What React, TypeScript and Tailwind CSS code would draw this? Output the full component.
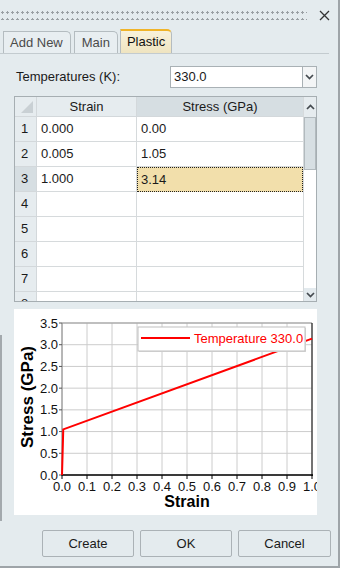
import React from 'react';

const rows = [
  { n: 1, strain: '0.000', stress: '0.00' },
  { n: 2, strain: '0.005', stress: '1.05' },
  { n: 3, strain: '1.000', stress: '3.14' },
  { n: 4, strain: '', stress: '' },
  { n: 5, strain: '', stress: '' },
  { n: 6, strain: '', stress: '' },
  { n: 7, strain: '', stress: '' },
  { n: 8, strain: '', stress: '' },
];

// plot area inside the chart panel
const PX0 = 48;
const PX1 = 298;
const PY0 = 14;
const PY1 = 166;
const sx = (v: number) => PX0 + v * (PX1 - PX0);
const sy = (v: number) => PY1 - (v / 3.5) * (PY1 - PY0);

const data: [number, number][] = [
  [0, 0],
  [0.005, 1.05],
  [1.0, 3.14],
];

const FONT = "'Liberation Sans', Arial, sans-serif";

function Chart() {
  const xs = Array.from({ length: 11 }, (_, i) => i / 10);
  const ys = Array.from({ length: 8 }, (_, i) => i * 0.5);
  return (
    <svg width="303" height="206" viewBox="0 0 303 206" className="block">
      {xs.map((v) => (
        <line key={'gx' + v} x1={sx(v)} x2={sx(v)} y1={PY0} y2={PY1} stroke="#cccccc" strokeWidth="1" />
      ))}
      {ys.map((v) => (
        <line key={'gy' + v} x1={PX0} x2={PX1} y1={sy(v)} y2={sy(v)} stroke="#cccccc" strokeWidth="1" />
      ))}
      <line x1={PX0} x2={PX1} y1={PY0} y2={PY0} stroke="#999999" />
      <line x1={PX0} x2={PX0} y1={PY0} y2={PY1} stroke="#888888" />
      <line x1={PX1} x2={PX1} y1={PY0} y2={PY1 + 1} stroke="#000000" />
      <line x1={PX0 - 1} x2={PX1 + 1} y1={PY1} y2={PY1} stroke="#000000" strokeWidth="1.5" />
      {xs.map((v) => (
        <line key={'tx' + v} x1={sx(v)} x2={sx(v)} y1={PY1} y2={PY1 + 4} stroke="#000000" />
      ))}
      {ys.map((v) => (
        <line key={'ty' + v} x1={PX0 - 3} x2={PX0} y1={sy(v)} y2={sy(v)} stroke="#555555" />
      ))}
      {ys.map((v) => (
        <text key={'ly' + v} x={PX0 - 4} y={sy(v) + 4.5} textAnchor="end" fontSize="13" fill="#111111" fontFamily={FONT}>
          {v.toFixed(1)}
        </text>
      ))}
      {xs.map((v) => (
        <text key={'lx' + v} x={sx(v)} y={PY1 + 16} textAnchor="middle" fontSize="13" fill="#111111" fontFamily={FONT}>
          {v.toFixed(1)}
        </text>
      ))}
      <polyline
        points={data.map(([x, y]) => `${sx(x)},${sy(y)}`).join(' ')}
        fill="none"
        stroke="#ff0000"
        strokeWidth="2"
      />
      {/* legend */}
      <rect x="125" y="19" width="167" height="24" fill="#d8d8d8" />
      <rect x="124" y="18" width="167" height="24" fill="#ffffff" stroke="#c0c0c0" />
      <line x1="127" x2="176" y1="29" y2="29" stroke="#ff0000" strokeWidth="2" />
      <text x="180" y="34" fontSize="13" fill="#ff0000" fontFamily={FONT}>
        Temperature 330.0
      </text>
      <text x="173" y="198" textAnchor="middle" fontSize="16" fontWeight="bold" fill="#000000" fontFamily={FONT}>
        Strain
      </text>
      <text
        transform="translate(19 88) rotate(-90)"
        textAnchor="middle"
        fontSize="17"
        fontWeight="bold"
        fill="#000000"
        fontFamily={FONT}
      >
        Stress (GPa)
      </text>
    </svg>
  );
}

function Chevron({ up = false }: { up?: boolean }) {
  return (
    <svg width="9" height="6" viewBox="0 0 9 6">
      <path d={up ? 'M1 5 L4.5 1.5 L8 5' : 'M1 1 L4.5 4.5 L8 1'} fill="none" stroke="#444a4f" strokeWidth="1.7" />
    </svg>
  );
}

export default function App() {
  return (
    <div
      className="relative w-[340px] h-[568px] overflow-hidden bg-[#e4ebee] text-[13px] text-[#1a1a1a] border-r-2 border-b-2 border-[#9ea4a8]"
      style={{ fontFamily: FONT }}
    >
      {/* edge of the window behind */}
      <div className="absolute left-0 top-[335px] h-[186px] w-[2px] bg-[#a3a9ad]" />

      {/* grip bar */}
      <div className="flex h-[31px] items-center pr-[8px]">
        <div className="h-[9px] flex-1 bg-[radial-gradient(circle,#9aa0a4_1px,transparent_1.4px)] bg-[length:5px_7px] bg-[position:0_-2px] mr-[12px]" />
        <svg width="11" height="11" viewBox="0 0 11 11">
          <path d="M1 1 L10 10 M10 1 L1 10" stroke="#333333" strokeWidth="1.3" />
        </svg>
      </div>

      {/* tabs */}
      <div className="flex items-end h-[23px] pl-[3px] mr-[9px] border-b border-[#c3cbcf]">
        <div className="flex h-[22px] items-center pl-[6px] pr-[7px] mr-[3px] border border-b-0 border-[#b4bcc0] rounded-tr-[5px] text-[#4a4a4a] bg-[#e8eef1]">
          Add New
        </div>
        <div className="flex h-[22px] items-center pl-[7px] pr-[7px] mr-[2px] border border-b-0 border-[#b4bcc0] rounded-tr-[5px] text-[#4a4a4a] bg-[#e8eef1]">
          Main
        </div>
        <div className="flex h-[24px] items-center pl-[6px] pr-[6px] border border-b-0 border-[#b4bcc0] border-t-2 border-t-[#f0b429] rounded-tr-[5px] bg-gradient-to-b from-[#f8f2dc] to-[#efe4c0] text-[#111111]">
          Plastic
        </div>
      </div>

      {/* temperature */}
      <div className="flex items-center h-[22px] mt-[12px] pl-[16px]">
        <span className="w-[154px]">Temperatures (K):</span>
        <div className="flex h-[22px] w-[147px] border border-[#a9b1b5] bg-white">
          <span className="flex-1 pl-[3px] leading-[20px]">330.0</span>
          <div className="flex w-[14px] items-center justify-center border-l border-[#a9b1b5] bg-[#f3f5f6]">
            <Chevron />
          </div>
        </div>
      </div>

      {/* table */}
      <div className="flex ml-[14px] mt-[8px] w-[303px] h-[206px] border border-[#a6aeb2] bg-white">
        <div className="flex-1 overflow-hidden">
          <div className="flex h-[20px] bg-[#e6ecef]">
            <div className="relative w-[22px] border-r border-b border-[#d3d8db]">
              <svg width="12" height="12" viewBox="0 0 12 12" className="absolute right-[3px] bottom-[3px]">
                <path d="M12 0 L12 12 L0 12 Z" fill="#c9d0d4" />
              </svg>
            </div>
            <div className="flex w-[100px] items-center justify-center border-r border-b border-[#d3d8db]">Strain</div>
            <div className="flex flex-1 items-center justify-center border-b border-[#d3d8db] bg-[#d6dee2]">Stress (GPa)</div>
          </div>
          {rows.map((r) => (
            <div key={r.n} className="flex h-[25px]">
              <div
                className={
                  r.n === 3
                    ? 'flex w-[22px] items-center pl-[6px] border-r border-b border-[#d3d8db] bg-[#d6dee2]'
                    : 'flex w-[22px] items-center pl-[6px] border-r border-b border-[#d3d8db] bg-[#e6ecef]'
                }
              >
                {r.n}
              </div>
              <div className="flex w-[100px] items-center pl-[4px] border-r border-b border-[#d6dadc]">{r.strain}</div>
              {r.n === 3 ? (
                <div className="flex flex-1 items-center pl-[3px] border border-dotted border-[#222222] bg-[#f2dfab]">
                  {r.stress}
                </div>
              ) : (
                <div className="flex flex-1 items-center pl-[4px] border-b border-[#d6dadc]">{r.stress}</div>
              )}
            </div>
          ))}
        </div>
        {/* scrollbar */}
        <div className="flex w-[13px] flex-col border-l border-[#d6dadc] bg-white">
          <div className="flex h-[20px] items-center justify-center bg-[#e6ecef]">
            <Chevron up />
          </div>
          <div className="h-[53px] bg-[#d7dfe3] border border-[#b2babe]" />
          <div className="flex-1" />
          <div className="flex h-[13px] items-center justify-center bg-[#e3eaee]">
            <Chevron />
          </div>
        </div>
      </div>

      {/* chart */}
      <div className="ml-[14px] mt-[7px] w-[303px] h-[206px] bg-white">
        <Chart />
      </div>

      {/* buttons */}
      <div className="flex justify-end gap-[6px] mt-[15px] pr-[7px]">
        <button className="h-[27px] w-[92px] rounded-[2px] border border-[#abb2b6] bg-[#e4ebee]">Create</button>
        <button className="h-[27px] w-[92px] rounded-[2px] border border-[#abb2b6] bg-[#e4ebee]">OK</button>
        <button className="h-[27px] w-[93px] rounded-[2px] border border-[#abb2b6] bg-[#e4ebee]">Cancel</button>
      </div>
    </div>
  );
}
